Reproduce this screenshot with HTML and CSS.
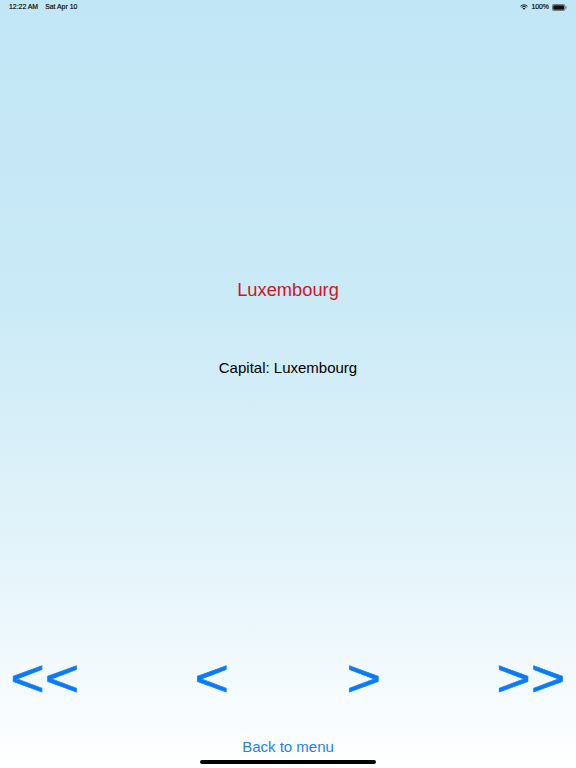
FILE: index.html
```html
<!DOCTYPE html>
<html lang="en">
<head>
<meta charset="utf-8">
<title>Luxembourg</title>
<link rel="stylesheet" href="styles.css">
</head>
<body>
<div class="screen">
  <header class="status">
    <div class="status-left">
      <span>12:22 AM</span>
      <span>Sat Apr 10</span>
    </div>
    <div class="status-right">
      <svg class="wifi" viewBox="0 0 16 12" width="8" height="6">
        <path d="M8 11.6 L5.4 8.9 A3.7 3.7 0 0 1 10.6 8.9 Z" fill="#111"/>
        <path d="M3.3 6.9 A6.6 6.6 0 0 1 12.7 6.9" fill="none" stroke="#111" stroke-width="1.9"/>
        <path d="M1 4.6 A9.8 9.8 0 0 1 15 4.6" fill="none" stroke="#111" stroke-width="1.9"/>
      </svg>
      <span>100%</span>
      <svg class="battery" viewBox="0 0 15 7" width="15" height="7">
        <rect x="0.4" y="0.4" width="12.4" height="6.2" rx="1.6" fill="none" stroke="#555" stroke-width="0.8"/>
        <rect x="1.2" y="1.2" width="10.8" height="4.6" rx="1" fill="#111"/>
        <rect x="13.4" y="2.3" width="1.2" height="2.4" rx="0.5" fill="#777"/>
      </svg>
    </div>
  </header>

  <main class="content">
    <h1 class="country">Luxembourg</h1>
    <p class="capital">Capital: Luxembourg</p>
  </main>

  <nav class="nav">
    <button class="nav-btn">&lt;&lt;</button>
    <button class="nav-btn">&lt;</button>
    <button class="nav-btn">&gt;</button>
    <button class="nav-btn">&gt;&gt;</button>
  </nav>

  <div class="back-row">
    <button class="back">Back to menu</button>
  </div>

  <div class="home-indicator"></div>
</div>
</body>
</html>
```

FILE: styles.css
```css
html, body {
  margin: 0;
  padding: 0;
}

body {
  width: 576px;
  height: 768px;
  overflow: hidden;
  font-family: "Liberation Sans", Arial, sans-serif;
}

.screen {
  position: relative;
  width: 576px;
  height: 768px;
  background: linear-gradient(to bottom, #c1e6f5 0%, #cbeaf7 40%, #e6f5fb 75%, #ffffff 100%);
  display: flex;
  flex-direction: column;
}

.status {
  height: 14px;
  display: flex;
  justify-content: space-between;
  align-items: center;
  padding: 0 9px;
  font-size: 6.9px;
  font-weight: normal;
  color: #000;
  line-height: 14px;
  -webkit-text-stroke: 0.15px #000;
}

.status-left {
  display: flex;
  gap: 7px;
}

.status-right {
  display: flex;
  align-items: center;
  gap: 3px;
}

.wifi, .battery {
  display: block;
}

.content {
  display: flex;
  flex-direction: column;
  align-items: center;
}

.country {
  margin: 264.7px 0 0;
  font-size: 18.3px;
  line-height: 22px;
  font-weight: normal;
  color: #d0141e;
}

.capital {
  margin: 58.4px 0 0;
  font-size: 15px;
  line-height: 18px;
  color: #000;
}

.nav {
  margin-top: 271.7px;
  display: flex;
  justify-content: space-between;
  padding: 0 15.6px 0 14.6px;
}

.nav-btn {
  display: inline-block;
  border: 0;
  background: none;
  padding: 0;
  margin: 0;
  font-family: "Liberation Sans", Arial, sans-serif;
  font-size: 51px;
  line-height: 60px;
  color: #0a7bf8;
  -webkit-text-stroke: 0.6px #0a7bf8;
  transform: scaleX(1.16);
  transform-origin: center;
}

.back-row {
  margin-top: 29.7px;
  display: flex;
  justify-content: center;
}

.back {
  border: 0;
  background: none;
  padding: 0;
  margin: 0;
  font-family: "Liberation Sans", Arial, sans-serif;
  font-size: 15px;
  line-height: 18px;
  color: #1c82e8;
}

.home-indicator {
  position: absolute;
  left: 200px;
  top: 760px;
  width: 176px;
  height: 4px;
  border-radius: 2px;
  background: #000;
}
```
